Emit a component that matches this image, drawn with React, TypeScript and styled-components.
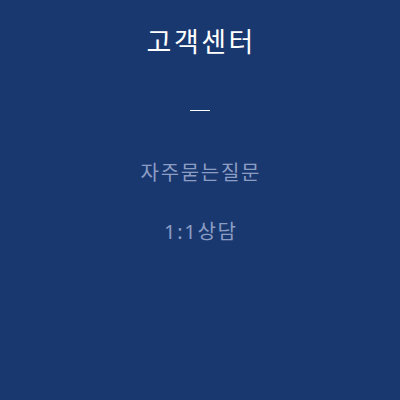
import styled, { createGlobalStyle } from 'styled-components'

const GlobalStyle = createGlobalStyle`
  html, body {
    margin: 0;
    padding: 0;
    background: #1a3870;
  }
  body {
    font-family: "Noto Sans", "Noto Sans CJK KR", sans-serif;
  }
`

const Panel = styled.nav`
  width: 400px;
  height: 400px;
  background: #1a3870;
  display: flex;
  flex-direction: column;
  align-items: center;
  box-sizing: border-box;
  padding-top: 24px;
`

const Title = styled.h2`
  margin: 0;
  color: #ffffff;
  font-size: 27px;
  font-weight: 400;
  line-height: 36px;
  letter-spacing: 2.5px;
  text-indent: 2.5px;
`

const Divider = styled.span`
  display: block;
  width: 20px;
  height: 1px;
  background: #ffffff;
  margin-top: 50px;
`

const MenuList = styled.ul`
  list-style: none;
  margin: 48px 0 0;
  padding: 0;
  display: flex;
  flex-direction: column;
  align-items: center;
  gap: 31px;
`

const MenuItem = styled.li`
  color: #8c9dc3;
  font-size: 20px;
  line-height: 28px;
  letter-spacing: 1.7px;
  text-indent: 1.7px;
`

export default function App() {
  return (
    <>
      <GlobalStyle />
      <Panel>
        <Title>고객센터</Title>
        <Divider />
        <MenuList>
          <MenuItem>자주묻는질문</MenuItem>
          <MenuItem>1:1상담</MenuItem>
        </MenuList>
      </Panel>
    </>
  )
}
